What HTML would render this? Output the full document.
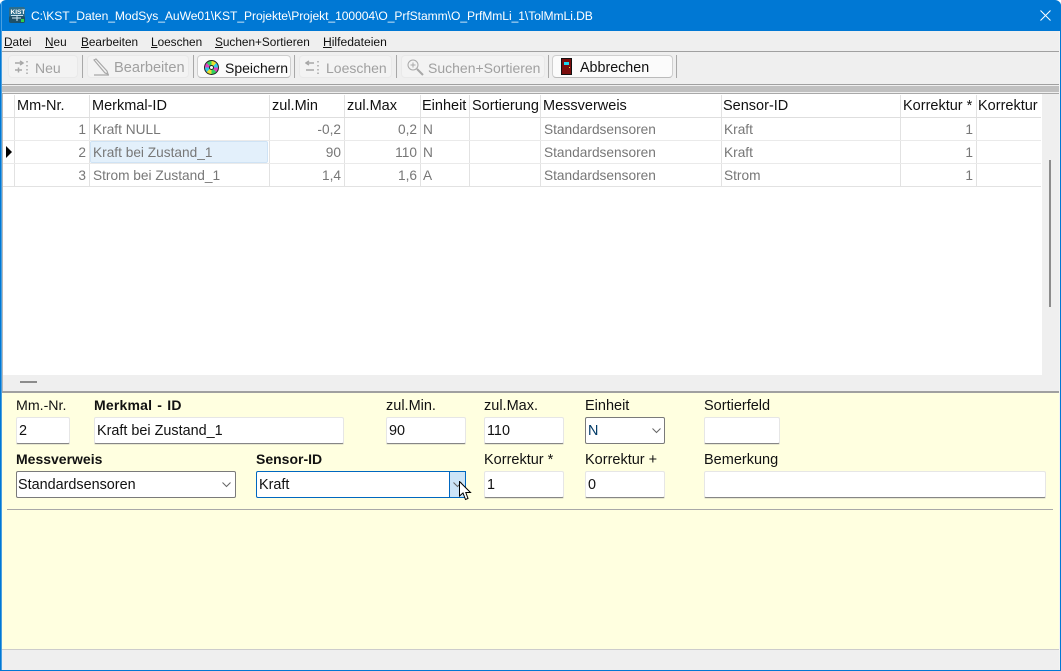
<!DOCTYPE html>
<html><head><meta charset="utf-8"><style>
html,body{margin:0;padding:0;background:#fff}
#w{position:relative;width:1061px;height:671px;overflow:hidden;background:#efefef;font-family:"Liberation Sans",sans-serif;font-size:13px;color:#111;border-radius:6px 6px 0 0}
#w div{position:absolute}
.t{white-space:nowrap;line-height:16px;height:16px}
.m{font-size:11.8px;top:34px;color:#111}
.m u{text-decoration:underline}
.tb{top:55px;height:23px;border-radius:4px;background:#f3f3f3;border:1px solid #e9e9e9;box-sizing:border-box}
.on{background:#fbfbfb;border:1px solid #cfcfcf;border-bottom-color:#bbb}
.bt{top:60px;font-size:14px;color:#a0a0a0}
.bk{color:#111}
.sp{top:55px;width:2px;height:23px;background:#a8a8a8;border-right:1px solid #eee;box-sizing:border-box}
.h{top:98px;font-size:14.5px;color:#111}
.c{font-size:13.7px;color:#777}
.r{text-align:right}
.vl{top:95px;width:1px;height:92px;background:#e2e2e2}
.hl{left:3px;width:1038px;height:1px;background:#eaeaea}
.l{font-size:14.5px;color:#111}
.b{font-weight:bold;font-size:14px}
.i{height:27px;background:#fff;border:1px solid #e6e6e6;border-bottom:1px solid #868686;box-sizing:border-box;border-radius:2px;box-shadow:0 1px 0 #e8e8d0}
.s{height:27px;background:#fff;border:1px solid #7a7a7a;box-sizing:border-box;border-radius:2px}
.v{font-size:14.4px;color:#111}
</style></head><body><div id="w">
<div style="left:0;top:0;width:1061px;height:31px;background:#0078d4"></div>
<svg style="position:absolute;left:9px;top:7px" width="16" height="16" viewBox="0 0 16 16"><rect width="16" height="16" rx="2" fill="#2c6d8c"/><rect y="9" width="16" height="7" rx="2" fill="#1f5068"/><text x="1.500" y="7" font-family="Liberation Sans" font-size="6.500" font-weight="bold" fill="#fff">KIST</text><path d="M2 8.500H14M3 11H12M8 8.500V14" stroke="#cfe6f2" stroke-width="1" fill="none"/><rect x="12" y="12" width="3" height="3" fill="#2fd14a"/></svg>
<div class="t" style="left:31px;top:8px;font-size:12.1px;color:#fff;letter-spacing:-.06px">C:\KST_Daten_ModSys_AuWe01\KST_Projekte\Projekt_100004\O_PrfStamm\O_PrfMmLi_1\TolMmLi.DB</div>
<svg style="position:absolute;left:1040px;top:10px" width="11" height="11" viewBox="0 0 11 11"><path d="M.5.5L10.500 10.500M10.500.5L.5 10.500" stroke="#fff" stroke-width="1"/></svg>

<div class="t m" style="left:4px"><u>D</u>atei</div>
<div class="t m" style="left:45px"><u>N</u>eu</div>
<div class="t m" style="left:81px"><u>B</u>earbeiten</div>
<div class="t m" style="left:151px"><u>L</u>oeschen</div>
<div class="t m" style="left:215px"><u>S</u>uchen+Sortieren</div>
<div class="t m" style="left:323px;font-size:12.100px"><u>H</u>ilfedateien</div>
<div style="left:0;top:51px;width:1061px;height:1px;background:#a0a0a0"></div>

<div class="tb" style="left:8px;width:70px"></div>
<svg style="position:absolute;left:14px;top:59px" width="17" height="16" viewBox="0 0 17 16" fill="none" stroke="#a8a8a8" stroke-width="1.500"><path d="M1 4H8M6 2L9 4L6 6M1 11H8M4.500 8.500V13.500M13 2V3.500M13 6V7.500M13 10V11.500M13 13.500V15"/></svg>
<div class="t bt" style="left:35px">Neu</div>
<div class="sp" style="left:82px"></div>
<div class="tb" style="left:87px;width:102px"></div>
<svg style="position:absolute;left:93px;top:58px" width="17" height="18" viewBox="0 0 17 18" fill="none" stroke="#a8a8a8" stroke-width="1.200"><path d="M1 2L3 1L14 13L15 16L12 15ZM1 17H16" /></svg>
<div class="t bt" style="left:114px;font-size:14.600px">Bearbeiten</div>
<div class="sp" style="left:193px"></div>
<div class="tb on" style="left:197px;width:94px"></div>
<div style="left:204px;top:60px;width:15px;height:15px;box-sizing:border-box;border:1px solid #222;border-radius:50%;background:conic-gradient(#e8e030 0 45deg,#30c8e8 45deg 90deg,#e040c0 90deg 135deg,#30d060 135deg 180deg,#e8e030 180deg 225deg,#30c8e8 225deg 270deg,#e040c0 270deg 315deg,#30d060 315deg 360deg)"></div>
<div style="left:209px;top:65px;width:5px;height:5px;box-sizing:border-box;border:1px solid #222;border-radius:50%;background:#fff"></div>
<div class="t bt bk" style="left:225px">Speichern</div>
<div class="sp" style="left:294px"></div>
<div class="tb" style="left:299px;width:93px"></div>
<svg style="position:absolute;left:305px;top:59px" width="17" height="16" viewBox="0 0 17 16" fill="none" stroke="#a8a8a8" stroke-width="1.500"><path d="M9 4H2M4 2L1 4L4 6M1 11H9M13 2V3.500M13 6V7.500M13 10V11.500M13 13.500V15"/></svg>
<div class="t bt" style="left:326px">Loeschen</div>
<div class="sp" style="left:396px"></div>
<div class="tb" style="left:401px;width:144px"></div>
<svg style="position:absolute;left:407px;top:59px" width="17" height="17" viewBox="0 0 17 17" fill="none" stroke="#a8a8a8"><circle cx="6" cy="6" r="5"/><path d="M6 3.500V8.500M3.500 6H8.500"/><path d="M10 10L16 16" stroke-width="2"/></svg>
<div class="t bt" style="left:428px">Suchen+Sortieren</div>
<div class="sp" style="left:548px"></div>
<div class="tb on" style="left:552px;width:121px"></div>
<svg style="position:absolute;left:561px;top:58px" width="11" height="17" viewBox="0 0 11 17"><rect x=".5" y=".5" width="10" height="16" fill="#7a0c0c" stroke="#111"/><rect x="3" y="4" width="5" height="3" fill="#1cd8f0"/><rect x="8" y="9" width="1" height="1" fill="#f0e040"/></svg>
<div class="t bt bk" style="left:580px;font-size:14.300px">Abbrechen</div>
<div class="sp" style="left:676px"></div>

<div style="left:0;top:84px;width:1061px;height:1px;background:#a0a0a0"></div>
<div style="left:0;top:86px;width:1061px;height:6px;background:#c0c0c0"></div>
<div style="left:2px;top:93px;width:1057px;height:1px;background:#a8a8a8"></div>

<div style="left:3px;top:94px;width:1039px;height:281px;background:#fff"></div>
<div style="left:2px;top:94px;width:1px;height:297px;background:#b8b8b8"></div>
<div class="vl" style="left:14px"></div>
<div class="vl" style="left:89px"></div>
<div class="vl" style="left:269px"></div>
<div class="vl" style="left:344px"></div>
<div class="vl" style="left:420px"></div>
<div class="vl" style="left:469px"></div>
<div class="vl" style="left:540px"></div>
<div class="vl" style="left:721px"></div>
<div class="vl" style="left:900px"></div>
<div class="vl" style="left:976px"></div>
<div class="hl" style="top:117px;background:#dedede"></div>
<div class="hl" style="top:140px"></div>
<div class="hl" style="top:163px"></div>
<div class="hl" style="top:186px;background:#e2e2e2"></div>

<div class="t h" style="left:17px">Mm-Nr.</div>
<div class="t h" style="left:92px">Merkmal-ID</div>
<div class="t h" style="left:272px">zul.Min</div>
<div class="t h" style="left:347px">zul.Max</div>
<div class="t h" style="left:422px">Einheit</div>
<div class="t h" style="left:472px">Sortierung</div>
<div class="t h" style="left:543px">Messverweis</div>
<div class="t h" style="left:723px">Sensor-ID</div>
<div class="t h" style="left:903px">Korrektur *</div>
<div class="t h" style="left:978px">Korrektur</div>

<div style="left:90px;top:141px;width:178px;height:22px;background:#e3f0fb;border:1px solid #cfe3f5;box-sizing:border-box;border-radius:2px"></div>
<svg style="position:absolute;left:6px;top:146px" width="6" height="12"><path d="M0 0L6 6L0 12Z" fill="#000"/></svg>

<div class="t c r" style="left:20px;width:66px;top:122px">1</div>
<div class="t c" style="left:93px;top:122px">Kraft NULL</div>
<div class="t c r" style="left:272px;width:69px;top:122px">-0,2</div>
<div class="t c r" style="left:347px;width:70px;top:122px">0,2</div>
<div class="t c" style="left:423px;top:122px">N</div>
<div class="t c" style="left:544px;top:122px">Standardsensoren</div>
<div class="t c" style="left:724px;top:122px">Kraft</div>
<div class="t c r" style="left:903px;width:70px;top:122px">1</div>

<div class="t c r" style="left:20px;width:66px;top:145px">2</div>
<div class="t c" style="left:93px;top:145px">Kraft bei Zustand_1</div>
<div class="t c r" style="left:272px;width:69px;top:145px">90</div>
<div class="t c r" style="left:347px;width:70px;top:145px">110</div>
<div class="t c" style="left:423px;top:145px">N</div>
<div class="t c" style="left:544px;top:145px">Standardsensoren</div>
<div class="t c" style="left:724px;top:145px">Kraft</div>
<div class="t c r" style="left:903px;width:70px;top:145px">1</div>

<div class="t c r" style="left:20px;width:66px;top:168px">3</div>
<div class="t c" style="left:93px;top:168px">Strom bei Zustand_1</div>
<div class="t c r" style="left:272px;width:69px;top:168px">1,4</div>
<div class="t c r" style="left:347px;width:70px;top:168px">1,6</div>
<div class="t c" style="left:423px;top:168px">A</div>
<div class="t c" style="left:544px;top:168px">Standardsensoren</div>
<div class="t c" style="left:724px;top:168px">Strom</div>
<div class="t c r" style="left:903px;width:70px;top:168px">1</div>

<div style="left:1049px;top:160px;width:2px;height:147px;background:#8c8c8c"></div>
<div style="left:20px;top:381px;width:17px;height:2px;background:#8c8c8c"></div>
<div style="left:2px;top:391px;width:1057px;height:2px;background:#a0a0a0"></div>

<div style="left:2px;top:393px;width:1057px;height:256px;background:#ffffe0"></div>
<div style="left:2px;top:649px;width:1057px;height:1px;background:#ccc"></div>

<div class="t l" style="left:16px;top:398px;font-size:14.200px">Mm.-Nr.</div>
<div class="t l b" style="left:94px;top:397px;letter-spacing:.2px;word-spacing:1px">Merkmal - ID</div>
<div class="t l" style="left:386px;top:398px">zul.Min.</div>
<div class="t l" style="left:484px;top:398px">zul.Max.</div>
<div class="t l" style="left:585px;top:398px">Einheit</div>
<div class="t l" style="left:704px;top:398px">Sortierfeld</div>

<div class="i" style="left:16px;top:417px;width:54px"></div><div class="t v" style="left:19px;top:423px">2</div>
<div class="i" style="left:94px;top:417px;width:250px"></div><div class="t v" style="left:97px;top:423px">Kraft bei Zustand_1</div>
<div class="i" style="left:386px;top:417px;width:80px"></div><div class="t v" style="left:389px;top:423px">90</div>
<div class="i" style="left:484px;top:417px;width:80px"></div><div class="t v" style="left:487px;top:423px">110</div>
<div class="s" style="left:585px;top:417px;width:80px"></div><div class="t v" style="left:588px;top:423px;color:#003a66">N</div>
<svg style="position:absolute;left:652px;top:428px" width="9" height="6"><path d="M.5.5L4.500 4.500L8.500.5" fill="none" stroke="#666"/></svg>
<div class="i" style="left:704px;top:417px;width:76px"></div>

<div class="t l b" style="left:16px;top:451px">Messverweis</div>
<div class="t l b" style="left:256px;top:451px">Sensor-ID</div>
<div class="t l" style="left:484px;top:452px">Korrektur *</div>
<div class="t l" style="left:585px;top:452px">Korrektur +</div>
<div class="t l" style="left:704px;top:452px">Bemerkung</div>

<div class="s" style="left:16px;top:471px;width:220px"></div><div class="t v" style="left:18px;top:477px">Standardsensoren</div>
<svg style="position:absolute;left:222px;top:482px" width="9" height="6"><path d="M.5.5L4.500 4.500L8.500.5" fill="none" stroke="#666"/></svg>
<div class="s" style="left:256px;top:471px;width:210px;border-color:#0067c0"></div><div class="t v" style="left:259px;top:477px">Kraft</div>
<div style="left:449px;top:471px;width:17px;height:27px;background:#cce4f7;border:1px solid #0067c0;box-sizing:border-box"></div>
<svg style="position:absolute;left:453px;top:482px" width="9" height="6"><path d="M.5.5L4.500 4.500L8.500.5" fill="none" stroke="#666"/></svg>
<div class="i" style="left:484px;top:471px;width:80px"></div><div class="t v" style="left:487px;top:477px">1</div>
<div class="i" style="left:585px;top:471px;width:80px"></div><div class="t v" style="left:588px;top:477px">0</div>
<div class="i" style="left:704px;top:471px;width:342px"></div>
<svg style="position:absolute;left:459px;top:481px" width="13" height="20" viewBox="0 0 13 20"><path d="M.5.5V15L4 12L6.500 18.500L9 17.500L6.800 11.500L11.500 11.500Z" fill="#fff" stroke="#000"/></svg>
<div style="left:7px;top:509px;width:1046px;height:1px;background:#a8a8a8"></div>

<div style="left:0;top:0;width:1px;height:671px;background:#0078d4"></div>
<div style="left:1px;top:0;width:1px;height:671px;background:#4a9fe0"></div>
<div style="left:1059px;top:31px;width:1px;height:639px;background:#f4f4f4"></div>
<div style="left:1060px;top:0;width:1px;height:671px;background:#0078d4"></div>
<div style="left:0;top:670px;width:1061px;height:1px;background:#0078d4"></div>
</div></body></html>
